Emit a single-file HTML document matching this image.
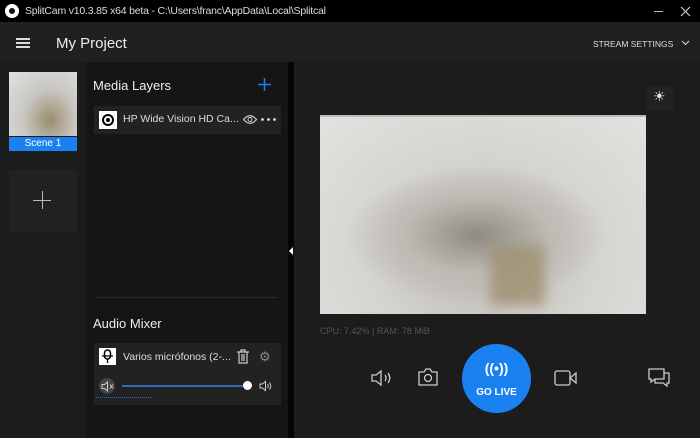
<!DOCTYPE html><html><head><style>
*{margin:0;padding:0;box-sizing:border-box}
body{width:700px;height:438px;overflow:hidden;background:#1c1c1c;font-family:"Liberation Sans",sans-serif;color:#ddd;position:relative}
.a{position:absolute}
svg{position:absolute;overflow:visible}
</style></head><body>
<div class="a" style="left:0;top:0;width:700px;height:22px;background:#000"></div>
<div class="a" style="left:5px;top:4px;width:14px;height:14px;border-radius:50%;background:#fff"></div>
<div class="a" style="left:9px;top:8px;width:6px;height:6px;border-radius:50%;background:#111"></div>
<div class="a" style="left:25px;top:5px;font-size:10.5px;color:#ddd;letter-spacing:-0.2px">SplitCam v10.3.85 x64 beta - C:\Users\franc\AppData\Local\Splitcal</div>
<div class="a" style="left:654px;top:11px;width:9px;height:1px;background:#bbb"></div>
<svg style="left:681px;top:7px" width="9" height="9"><path d="M0 0L9 9M9 0L0 9" stroke="#ccc" stroke-width="1.2"/></svg>
<div class="a" style="left:0;top:22px;width:700px;height:40px;background:#202020"></div>
<div class="a" style="left:16px;top:38px;width:14px;height:2px;background:#ddd;box-shadow:0 4px 0 #ddd,0 8px 0 #ddd"></div>
<div class="a" style="left:56px;top:35px;font-size:15px;color:#eee">My Project</div>
<div class="a" style="left:593px;top:39px;font-size:8.5px;color:#ddd">STREAM SETTINGS</div>
<svg style="left:682px;top:41px" width="7" height="4"><path d="M0 0L3.5 3.5L7 0" stroke="#ddd" fill="none"/></svg>
<div class="a" style="left:87px;top:62px;width:201px;height:376px;background:#151515"></div>
<div class="a" style="left:288px;top:62px;width:6px;height:376px;background:#050505"></div>
<div class="a" style="left:289px;top:247px;width:0;height:0;border-top:4px solid transparent;border-bottom:4px solid transparent;border-right:4px solid #fff"></div>
<div class="a" style="left:9px;top:72px;width:68px;height:64px;background:radial-gradient(ellipse at 60% 75%,#9a8e70,#c8c6c0 45%,#dfe2e4)"></div>
<div class="a" style="left:9px;top:137px;width:68px;height:14px;background:#1a82f0;color:#fff;font-size:10px;text-align:center;line-height:14px">Scene 1</div>
<div class="a" style="left:9px;top:170px;width:68px;height:62px;background:#222"></div>
<div class="a" style="left:33px;top:200px;width:18px;height:1px;background:#bbb"></div>
<div class="a" style="left:42px;top:191px;width:1px;height:18px;background:#bbb"></div>
<div class="a" style="left:93px;top:78px;font-size:13px;color:#eee">Media Layers</div>
<svg style="left:258px;top:78px" width="13" height="13"><path d="M6.5 0V13M0 6.5H13" stroke="#1a82f0" stroke-width="1.5"/></svg>
<div class="a" style="left:94px;top:106px;width:187px;height:28px;background:#222"></div>
<div class="a" style="left:99px;top:111px;width:18px;height:18px;background:#fff"></div>
<div class="a" style="left:102px;top:114px;width:12px;height:12px;border-radius:50%;border:2px solid #000"></div>
<div class="a" style="left:106px;top:118px;width:4px;height:4px;border-radius:50%;background:#000"></div>
<div class="a" style="left:123px;top:113px;font-size:10.5px;color:#ddd">HP Wide Vision HD Ca...</div>
<svg style="left:243px;top:115px" width="14" height="9"><path d="M0.5 4.5Q7 -3 13.5 4.5Q7 12 0.5 4.5Z" stroke="#ccc" fill="none" stroke-width="1.2"/><circle cx="7" cy="4.5" r="2" stroke="#ccc" fill="none"/></svg>
<svg style="left:261px;top:118px" width="15" height="3"><circle cx="1.5" cy="1.5" r="1.4" fill="#ddd"/><circle cx="7.5" cy="1.5" r="1.4" fill="#ddd"/><circle cx="13.5" cy="1.5" r="1.4" fill="#ddd"/></svg>
<div class="a" style="left:96px;top:297px;width:182px;height:1px;background:#2a2a2a"></div>
<div class="a" style="left:93px;top:316px;font-size:13px;color:#eee">Audio Mixer</div>
<div class="a" style="left:94px;top:343px;width:187px;height:62px;background:#222"></div>
<div class="a" style="left:99px;top:348px;width:17px;height:17px;background:#fff"></div>
<svg style="left:99px;top:348px" width="17" height="17"><rect x="5.5" y="2" width="6" height="9" rx="3" stroke="#000" fill="none" stroke-width="1.5"/><path d="M3 8H14M8.5 11V15" stroke="#000" stroke-width="1.3"/></svg>
<div class="a" style="left:123px;top:351px;font-size:10.5px;color:#ddd">Varios micrófonos (2-...</div>
<svg style="left:237px;top:350px" width="12" height="13"><path d="M0 2H12M4 2V0H8V2M2 2V13H10V2M5 4V11M7 4V11" stroke="#ccc" fill="none" stroke-width="1.2"/></svg>
<div class="a" style="left:259px;top:349px;font-size:13px;color:#888">⚙</div>
<div class="a" style="left:99px;top:378px;width:16px;height:16px;border-radius:50%;background:#444"></div>
<svg style="left:102px;top:382px" width="12" height="9"><path d="M0 2.5H2.5L5.5 0V9L2.5 6.5H0Z" stroke="#ccc" fill="none"/><path d="M8 2.5L11 6.5M11 2.5L8 6.5" stroke="#ccc"/></svg>
<div class="a" style="left:122px;top:385px;width:125px;height:2px;background:#2a6cb8"></div>
<div class="a" style="left:243px;top:381px;width:9px;height:9px;border-radius:50%;background:#fff"></div>
<svg style="left:260px;top:381px" width="12" height="10"><path d="M0 3H2.5L5.5 0.5V9.5L2.5 7H0Z" stroke="#ccc" fill="none"/><path d="M7.5 3Q9 5 7.5 7M9.5 1.5Q12 5 9.5 8.5" stroke="#ccc" fill="none"/></svg>
<div class="a" style="left:96px;top:397px;width:55px;height:1px;border-top:1px dotted #2a6cb8"></div>
<div class="a" style="left:646px;top:86px;width:28px;height:24px;background:#222"></div>
<div class="a" style="left:653px;top:88px;font-size:14px;color:#eee">☀</div>
<div class="a" style="left:320px;top:115px;width:326px;height:199px;background:radial-gradient(ellipse 40% 35% at 48% 60%,#8e8a84,#bdbab4 55%,transparent),radial-gradient(ellipse at 50% 70%,#b9b6b0,#d6d4d0 50%,#e4e2e0);border-top:2px solid #bbb"></div>
<div class="a" style="left:490px;top:245px;width:55px;height:60px;background:#9e9070;filter:blur(6px);opacity:.8"></div>
<div class="a" style="left:320px;top:326px;font-size:9px;color:#555">CPU: 7.42% | RAM: 78 MiB</div>
<svg style="left:371px;top:370px" width="22" height="16"><path d="M1 5H5L10 1V15L5 11H1Z" stroke="#ccc" fill="none" stroke-width="1.3"/><path d="M14 5Q16 8 14 11M17 3Q20.5 8 17 13" stroke="#ccc" fill="none" stroke-width="1.3"/></svg>
<svg style="left:418px;top:368px" width="20" height="18"><path d="M1 4H6L8 1H12L14 4H19V17H1Z" stroke="#ccc" fill="none" stroke-width="1.3"/><circle cx="10" cy="10" r="3.5" stroke="#ccc" fill="none" stroke-width="1.3"/></svg>
<div class="a" style="left:462px;top:344px;width:69px;height:69px;border-radius:50%;background:#1a82f0"></div>
<div class="a" style="left:462px;top:360px;width:69px;text-align:center;font-size:14px;color:#fff;font-weight:bold">((•))</div>
<div class="a" style="left:462px;top:387px;width:69px;text-align:center;font-size:10px;color:#fff;font-weight:bold">GO LIVE</div>
<svg style="left:554px;top:370px" width="24" height="16"><rect x="1" y="1" width="15" height="14" rx="2" stroke="#ccc" fill="none" stroke-width="1.3"/><path d="M16 8L22 3V13Z" stroke="#ccc" fill="none" stroke-width="1.3"/></svg>
<svg style="left:648px;top:368px" width="22" height="19"><path d="M1 1H16V11H7L3 14V11H1Z" stroke="#ccc" fill="none" stroke-width="1.3"/><path d="M16 5H21V15H19V18L15 15H7V11" stroke="#ccc" fill="none" stroke-width="1.3"/></svg>
</body></html>
